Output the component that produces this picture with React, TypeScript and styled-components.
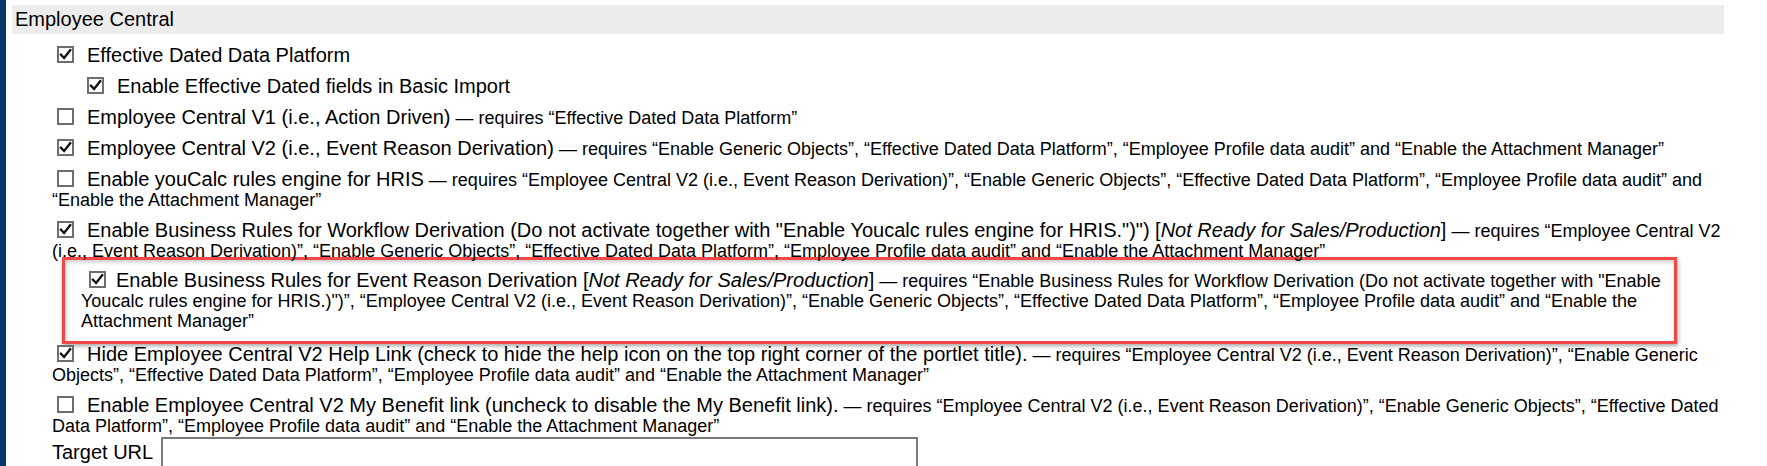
import React from "react";
import styled, { createGlobalStyle } from "styled-components";

const GlobalStyle = createGlobalStyle`
  html, body { margin: 0; padding: 0; background: #ffffff; }
  body {
    font-family: "Liberation Sans", Arial, Helvetica, sans-serif;
    color: #000000;
  }
`;

const Page = styled.div`
  display: flex;
  width: 1767px;
  min-height: 466px;
  overflow: hidden;
`;

const Rail = styled.div`
  flex: none;
  width: 6px;
  background: #0b3766;
`;

const Main = styled.main`
  flex: none;
  width: 1712px;
  padding: 5px 0 0 6px;
`;

const SectionHeader = styled.div`
  height: 29px;
  line-height: 29px;
  padding-left: 3px;
  background: #ececec;
  font-size: 20px;
`;

const Options = styled.div`
  padding-left: 40px;
`;

const Item = styled.div<{ $indent?: boolean }>`
  margin-top: 11px;
  padding-left: ${(p) => (p.$indent ? 30 : 0)}px;
  font-size: 20px;
  line-height: 20px;
`;

const Note = styled.span`
  font-size: 18px;
  line-height: 16px;
`;

const Highlight = styled.div`
  margin: -3px 47px 0 10px;
  padding: 10px 4px 11px 16px;
  border: 3px solid #f04848;
  box-shadow: 1px 2px 4px rgba(0, 0, 0, 0.35),
    inset 1px 2px 4px rgba(0, 0, 0, 0.22);

  & > ${Item} {
    margin-top: 0;
  }

  & + ${Item} {
    margin-top: 0;
  }
`;

const Box = styled.span<{ $inset?: boolean }>`
  display: inline-block;
  box-sizing: border-box;
  width: 17px;
  height: 17px;
  margin: 0 ${(p) => (p.$inset ? 10 : 13)}px 0 ${(p) => (p.$inset ? 8 : 5)}px;
  border: 2px solid #6e6e6e;
  background: #ffffff;
  vertical-align: -1px;

  svg {
    display: block;
  }
`;

const UrlRow = styled.div`
  display: flex;
  align-items: flex-start;
  gap: 8px;
  margin-top: 2px;
  font-size: 20px;
  line-height: 20px;
`;

const UrlLabel = styled.label`
  padding-top: 5px;
`;

const UrlInput = styled.input`
  box-sizing: border-box;
  width: 757px;
  height: 34px;
  margin: 0;
  border: 2px solid #7a7a7a;
  background: #ffffff;
  font: inherit;
`;

function Check({ checked, inset }: { checked: boolean; inset?: boolean }) {
  return (
    <Box role="checkbox" aria-checked={checked} $inset={inset}>
      {checked && (
        <svg width="13" height="13" viewBox="0 0 13 13">
          <polyline
            points="2,6.8 5.1,10 11.2,2.2"
            fill="none"
            stroke="#111"
            strokeWidth="2.4"
            strokeLinecap="square"
          />
        </svg>
      )}
    </Box>
  );
}

const DEPS =
  "“Employee Central V2 (i.e., Event Reason Derivation)”, “Enable Generic Objects”, “Effective Dated Data Platform”, “Employee Profile data audit” and “Enable the Attachment Manager”";

export default function App() {
  return (
    <>
      <GlobalStyle />
      <Page>
        <Rail />
        <Main>
          <SectionHeader>Employee Central</SectionHeader>
          <Options>
            <Item>
              <Check checked />
              Effective Dated Data Platform
            </Item>
            <Item $indent>
              <Check checked />
              Enable Effective Dated fields in Basic Import
            </Item>
            <Item>
              <Check checked={false} />
              Employee Central V1 (i.e., Action Driven)
              <Note> — requires “Effective Dated Data Platform”</Note>
            </Item>
            <Item>
              <Check checked />
              Employee Central V2 (i.e., Event Reason Derivation)
              <Note>
                {" "}
                — requires “Enable Generic Objects”, “Effective Dated Data
                Platform”, “Employee Profile data audit” and “Enable the
                Attachment Manager”
              </Note>
            </Item>
            <Item>
              <Check checked={false} />
              Enable youCalc rules engine for HRIS
              <Note> — requires {DEPS}</Note>
            </Item>
            <Item>
              <Check checked />
              Enable Business Rules for Workflow Derivation (Do not activate
              together with "Enable Youcalc rules engine for HRIS.")") [
              <i>Not Ready for Sales/Production</i>]
              <Note> — requires {DEPS}</Note>
            </Item>
            <Highlight>
              <Item>
                <Check checked inset />
                Enable Business Rules for Event Reason Derivation [
                <i>Not Ready for Sales/Production</i>]
                <Note>
                  {" "}
                  — requires “Enable Business Rules for Workflow Derivation
                  (Do not activate together with "Enable Youcalc rules engine
                  for HRIS.)")”, {DEPS}
                </Note>
              </Item>
            </Highlight>
            <Item>
              <Check checked />
              Hide Employee Central V2 Help Link (check to hide the help icon
              on the top right corner of the portlet title).
              <Note> — requires {DEPS}</Note>
            </Item>
            <Item>
              <Check checked={false} />
              Enable Employee Central V2 My Benefit link (uncheck to disable
              the My Benefit link).
              <Note> — requires {DEPS}</Note>
            </Item>
            <UrlRow>
              <UrlLabel htmlFor="target-url">Target URL</UrlLabel>
              <UrlInput id="target-url" type="text" />
            </UrlRow>
          </Options>
        </Main>
      </Page>
    </>
  );
}
